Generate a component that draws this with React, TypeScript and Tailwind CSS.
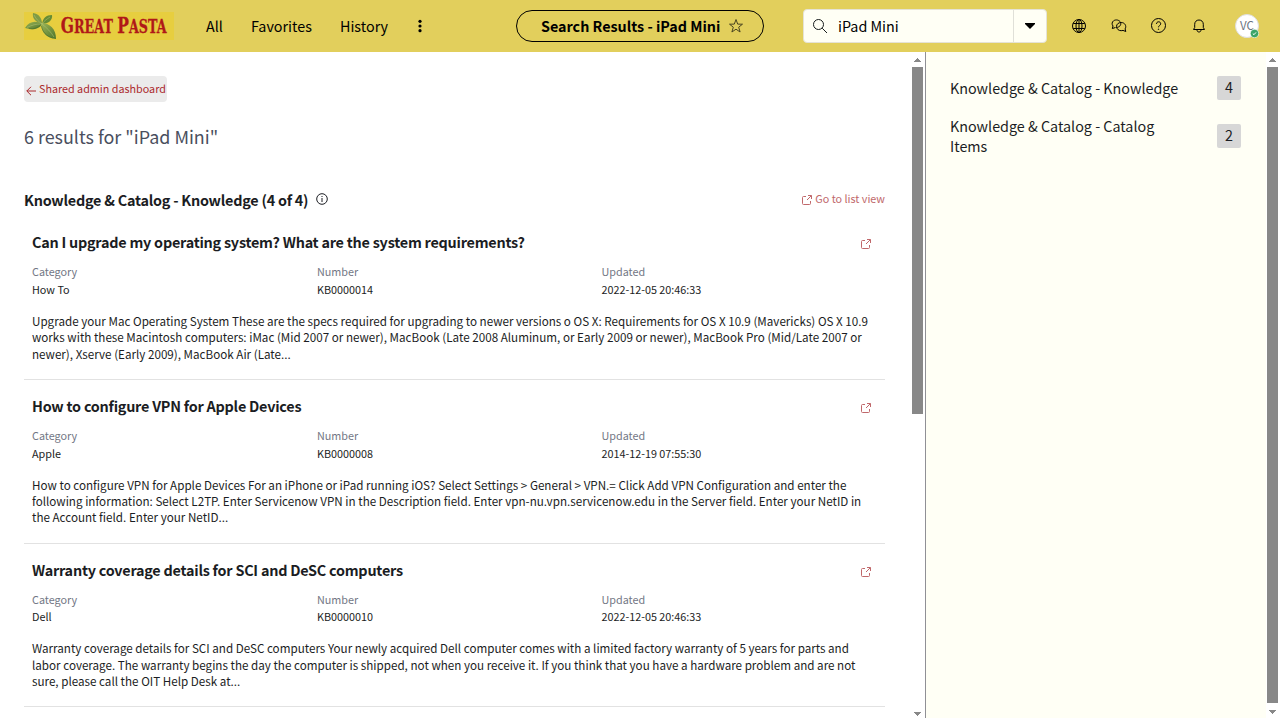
import type { ReactNode } from "react";

type Article = {
  title: string;
  category: string;
  number: string;
  updated: string;
  lines: string[];
};

const articles: Article[] = [
  {
    title: "Can I upgrade my operating system? What are the system requirements?",
    category: "How To",
    number: "KB0000014",
    updated: "2022-12-05 20:46:33",
    lines: [
      "Upgrade your Mac Operating System These are the specs required for upgrading to newer versions o OS X: Requirements for OS X 10.9 (Mavericks) OS X 10.9",
      "works with these Macintosh computers: iMac (Mid 2007 or newer), MacBook (Late 2008 Aluminum, or Early 2009 or newer), MacBook Pro (Mid/Late 2007 or",
      "newer), Xserve (Early 2009), MacBook Air (Late...",
    ],
  },
  {
    title: "How to configure VPN for Apple Devices",
    category: "Apple",
    number: "KB0000008",
    updated: "2014-12-19 07:55:30",
    lines: [
      "How to configure VPN for Apple Devices For an iPhone or iPad running iOS? Select Settings > General > VPN.= Click Add VPN Configuration and enter the",
      "following information: Select L2TP. Enter Servicenow VPN in the Description field. Enter vpn-nu.vpn.servicenow.edu in the Server field. Enter your NetID in",
      "the Account field. Enter your NetID...",
    ],
  },
  {
    title: "Warranty coverage details for SCI and DeSC computers",
    category: "Dell",
    number: "KB0000010",
    updated: "2022-12-05 20:46:33",
    lines: [
      "Warranty coverage details for SCI and DeSC computers Your newly acquired Dell computer comes with a limited factory warranty of 5 years for parts and",
      "labor coverage. The warranty begins the day the computer is shipped, not when you receive it. If you think that you have a hardware problem and are not",
      "sure, please call the OIT Help Desk at...",
    ],
  },
];

function Icon({ size = 16, className = "", children }: { size?: number; className?: string; children: ReactNode }) {
  return (
    <svg width={size} height={size} viewBox="0 0 16 16" fill="none" stroke="currentColor" strokeWidth="1" className={"shrink-0 " + className}>
      {children}
    </svg>
  );
}

function ExternalIcon() {
  return (
    <svg width="10" height="10" viewBox="0 0 10 10" fill="none" stroke="currentColor" className="shrink-0">
      <path d="M4 1.5H1.5a1 1 0 0 0-1 1v6a1 1 0 0 0 1 1h6a1 1 0 0 0 1-1V6M6 .5h3.5V4M9.3.7L5 5" />
    </svg>
  );
}

function Logo() {
  return (
    <svg width="150" height="28" viewBox="0 0 150 28" className="shrink-0">
      <defs>
        <linearGradient id="leaf" x1="0" y1="0" x2="1" y2="1">
          <stop offset="0" stopColor="#9db557" />
          <stop offset="1" stopColor="#4c742a" />
        </linearGradient>
      </defs>
      <rect width="150" height="28" fill="#e7ce3f" />
      <path d="M1 16C5 9 12 8 18 12 15 18 7 18 1 16Z" fill="url(#leaf)" />
      <path d="M9 1c6 1 9 5 9 11C12 10 8 7 9 1Z" fill="#7f9b45" />
      <path d="M28 3c1 5-4 9-10 9 1-6 4-9 10-9Z" fill="#668c35" />
      <path d="M17 11c9 0 15 6 15 16-9-1-15-6-15-16Z" fill="url(#leaf)" />
      <path d="M3 15.500C8 13 12 12 17 12M10 3c2 4 5 7 8 9 2-3 5-5 8-7M18 12c5 4 9 8 12 13" fill="none" stroke="#b4c57a" strokeWidth=".5" />
      <path d="M5 16.500c5 1 9-1 12-4M17.500 14c1 6 5 10 11 12" fill="none" stroke="#4b6f2b" strokeWidth=".6" />
      <text transform="translate(36.800 21) scale(.705 1)" fill="#b01818" stroke="#b01818" strokeWidth=".3" fontFamily="'DejaVu Serif',serif" fontWeight="700">
        <tspan fontSize="22">G</tspan>
        <tspan fontSize="18">REAT </tspan>
        <tspan fontSize="22">P</tspan>
        <tspan fontSize="18">ASTA</tspan>
      </text>
    </svg>
  );
}

function Header() {
  return (
    <header className="flex h-[52px] w-[1280px] shrink-0 items-center bg-[#e2cf5c] text-black">
      <div className="ml-6 w-[150px]"><Logo /></div>
      <nav className="ml-8 flex h-6 items-center text-[14.330px] leading-6">
        <span className="w-[45px]">All</span>
        <span className="w-[89px]">Favorites</span>
        <span className="w-[76px]">History</span>
        <svg width="8" height="16" viewBox="0 0 8 16" fill="black">
          <circle cx="4" cy="3.300" r="1.600" /><circle cx="4" cy="8" r="1.600" /><circle cx="4" cy="12.700" r="1.600" />
        </svg>
      </nav>
      <div className="ml-[92px] flex h-8 w-[248px] items-center rounded-full border border-black pl-6">
        <span className="w-[187px] whitespace-nowrap text-[14.340px] leading-6 font-bold">Search Results - iPad Mini</span>
        <Icon className="text-[#4a4520]">
          <path d="M8 1.500l1.700 4.600 4.800.1-3.800 3 1.400 4.800L8 11.200 3.900 14l1.400-4.800-3.800-3 4.800-.1z" />
        </Icon>
      </div>
      <div className="ml-[39px] flex h-[34px] w-[244px] items-center rounded border border-[#e5e3d6] bg-[#fffff5]">
        <Icon className="ml-2 text-[#161b1c]">
          <circle cx="6.500" cy="6.500" r="5" /><path d="M10.200 10.200L15 15" />
        </Icon>
        <span className="ml-2.5 w-[175px] text-[14.330px] leading-6">iPad Mini</span>
        <div className="flex h-8 flex-1 items-center justify-center border-l border-[#e0e0d8]">
          <svg width="10" height="6" viewBox="0 0 10 6"><path d="M0 0h10v1L5 6 0 1z" /></svg>
        </div>
      </div>
      <div className="ml-6 flex items-center gap-6">
        <Icon>
          <circle cx="8" cy="8" r="6.500" /><ellipse cx="8" cy="8" rx="3" ry="6.500" /><path d="M2.200 5.500h11.600M2.200 10.500h11.600M8 1.500v13" />
        </Icon>
        <Icon>
          <path d="M4.500 9.500L1.300 10.500 2 8C.6 6.200.9 4 2.600 2.800c2.200-1.600 5.900-.9 7 1.700" />
          <path d="M10.200 4.500c-2.700 0-4.700 1.700-4.700 4s2 4.200 4.700 4.200c.6 0 1.200-.1 1.800-.3l2.800 1.100-.7-2.600c1.800-2.900-.3-6.400-3.900-6.400z" />
          <path d="M9.600 4.500c.8 2.500-1 4.700-4 4.900" />
        </Icon>
        <Icon>
          <circle cx="7.500" cy="7.500" r="7" /><path d="M5.500 6c0-1.300.8-2.200 2.100-2.200S9.700 4.600 9.700 5.800c0 1.600-2.200 1.700-2.200 3.500" /><circle cx="7.500" cy="11.200" r=".3" />
        </Icon>
        <Icon>
          <path d="M2.500 11.500h11l-1.200-2V6.300C12.300 3.700 10.500 2 8 2S3.700 3.700 3.700 6.300v3.200zM6 12c0 1.200.8 2 2 2s2-.8 2-2" />
        </Icon>
      </div>
      <div className="relative ml-7 flex h-6 w-6 items-center justify-center rounded-full border border-[#dedede] bg-white pb-[3px] text-[11.500px] leading-5 text-[#6b7480]">
        VC
        <svg width="9" height="9" viewBox="0 0 9 9" className="absolute -right-px -bottom-px">
          <circle cx="4.500" cy="4.500" r="4.200" fill="#39a467" stroke="white" strokeWidth=".6" /><path d="M2.800 4.600l1.200 1.100 2-2.300" fill="none" stroke="white" />
        </svg>
      </div>
    </header>
  );
}

function UpArrow() {
  return <svg width="7" height="4" viewBox="0 0 7 4" fill="#888"><path d="M3 0h1v1h1v1h1v1h1v1H0V3h1V2h1V1h1z" /></svg>;
}

function DownArrow() {
  return <svg width="7" height="4" viewBox="0 0 7 4" fill="#888"><path d="M0 0h7v1H6v1H5v1H4v1H3V3H2V2H1V1H0z" /></svg>;
}

function Field({ label, value }: { label: string; value: string }) {
  return (
    <div className="text-[10.800px]">
      <div className="h-[17.600px] leading-[18px] text-[#737785]">{label}</div>
      <div className="h-[17.600px] leading-[18px] text-[#1b1d23]">{value}</div>
    </div>
  );
}

function Result({ article }: { article: Article }) {
  return (
    <article className="h-[163.750px] w-[861px] shrink-0 border-b border-[#e2e2e2] pt-[14px] pl-2">
      <div className="flex h-6 items-center justify-between pr-[14px]">
        <h3 className="text-[14.400px] leading-6 font-bold tracking-[-0.235px] whitespace-nowrap">{article.title}</h3>
        <span className="pt-1 text-[#c0686b]"><ExternalIcon /></span>
      </div>
      <div className="mt-2 grid grid-cols-[285px_284.500px_1fr]">
        <Field label="Category" value={article.category} />
        <Field label="Number" value={article.number} />
        <Field label="Updated" value={article.updated} />
      </div>
      <p className="mt-[15.550px] text-[11.650px] leading-[16.300px] whitespace-nowrap">
        {article.lines.map((line) => (
          <span key={line} className="block">{line}</span>
        ))}
      </p>
    </article>
  );
}

function Count({ value }: { value: number }) {
  return <span className="flex h-6 w-6 justify-center rounded-xs bg-[#d7d7d7] text-[14.330px] leading-[22px]">{value}</span>;
}

export default function App() {
  return (
    <div className="flex h-[718px] w-full flex-col overflow-hidden bg-white font-['Noto_Sans_CJK_SC','Source_Sans_3',sans-serif] text-[#1b1d23]">
      <Header />
      <div className="flex min-h-0 flex-1">
        <main className="flex w-[912px] flex-col overflow-hidden pt-6 pl-6">
          <button className="flex h-[26px] w-[143px] shrink-0 items-center rounded-sm bg-[#ebebeb] pl-0.5 text-[10.780px] leading-6 whitespace-nowrap text-[#ab2a2d]">
            <svg width="10" height="10" viewBox="0 0 10 10" fill="none" stroke="currentColor" className="mt-[3px] mr-[3px] shrink-0">
              <path d="M10 5H.8M5 .8L.8 5 5 9.200" />
            </svg>
            <span className="pb-[2px]">Shared admin dashboard</span>
          </button>
          <h1 className="mt-[18px] h-8 shrink-0 text-[17.920px] leading-8 text-[#4a4f5e]">6 results for "iPad Mini"</h1>
          <div className="mt-8 mb-[0.200px] flex h-8 w-[861px] shrink-0 items-center">
            <h2 className="text-[14.400px] leading-6 font-bold tracking-[-0.230px] whitespace-nowrap">Knowledge &amp; Catalog - Knowledge (4 of 4)</h2>
            <svg width="12" height="12" viewBox="0 0 12 12" fill="none" stroke="currentColor" className="mb-[2px] ml-[7.500px] shrink-0">
              <circle cx="6" cy="6" r="5.300" /><path d="M6 5v4M6 3v1" />
            </svg>
            <span className="mb-[3px] ml-auto flex items-center gap-[3px] text-[10.780px] leading-5 text-[#c0686b]">
              <span className="pt-[2px]"><ExternalIcon /></span>
              <span className="pb-[2px]">Go to list view</span>
            </span>
          </div>
          {articles.map((a) => <Result key={a.number} article={a} />)}
        </main>
        <div className="flex w-[13px] flex-col items-start">
          <div className="flex h-[15px] w-[11px] items-center justify-center"><UpArrow /></div>
          <div className="h-[347px] w-[11px] bg-[#888]" />
          <div className="mt-auto flex h-[6px] w-[11px] justify-center"><DownArrow /></div>
        </div>
        <aside className="w-[341px] border-l border-[#909095] bg-[#fffff5] pt-6 pl-6 text-[14.330px]">
          <div className="flex h-6 w-[291px] items-center justify-between">
            <span className="leading-5">Knowledge &amp; Catalog - Knowledge</span><Count value={4} />
          </div>
          <div className="mt-4 flex h-10 w-[291px] items-center justify-between">
            <span className="leading-5">Knowledge &amp; Catalog - Catalog<br />Items</span><Count value={2} />
          </div>
        </aside>
        <div className="flex w-[13px] flex-col items-start pl-px">
          <div className="flex h-[15px] w-[11px] items-center justify-center"><UpArrow /></div>
          <div className="h-[636px] w-[11px] bg-[#888]" />
          <div className="flex w-[11px] justify-center pt-[7px]"><DownArrow /></div>
        </div>
      </div>
    </div>
  );
}
